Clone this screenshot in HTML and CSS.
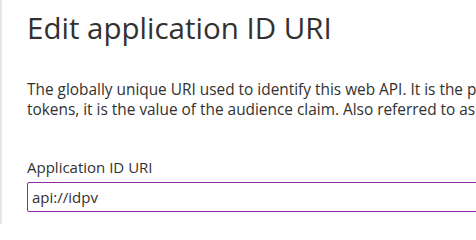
FILE: index.html
```html
<!DOCTYPE html>
<html>
<head>
<meta charset="utf-8">
<link rel="stylesheet" href="styles.css">
</head>
<body>
<div class="panel">
  <h1 class="title">Edit application ID URI</h1>
  <p class="desc">The globally unique URI used to identify this web API. It is the prefix for scopes and in access tokens, it is the value of the audience claim. Also referred to as an identifier URI.</p>
  <div class="field">
    <label class="label">Application ID URI</label>
    <div class="input">api://idpv</div>
  </div>
</div>
</body>
</html>
```
FILE: styles.css
```css
html, body {
  margin: 0;
  padding: 0;
  background: #ffffff;
}
body {
  width: 476px;
  height: 224px;
  overflow: hidden;
}
.panel {
  box-sizing: border-box;
  height: 224px;
  border-left: 2px solid #e6e6e6;
  padding: 6px 0 0 25px;
  font-family: "Open Sans", "Noto Sans", sans-serif;
  color: #323130;
  width: 476px;
  overflow: hidden;
}
.title {
  margin: 0;
  font-size: 29.5px;
  font-weight: 500;
  line-height: 44px;
  white-space: nowrap;
}
.desc {
  margin: 30px 0 0 0;
  font-size: 15.4px;
  line-height: 20px;
  width: 675px;
}
.field {
  margin-top: 37px;
  display: flex;
  flex-direction: column;
  width: 675px;
}
.label {
  font-size: 15px;
  line-height: 20px;
  margin-bottom: 5px;
}
.input {
  box-sizing: border-box;
  height: 30px;
  border: 1px solid #8a2c9c;
  border-radius: 2px;
  padding: 0 8px 0 4px;
  font-size: 15px;
  line-height: 28px;
}
```
